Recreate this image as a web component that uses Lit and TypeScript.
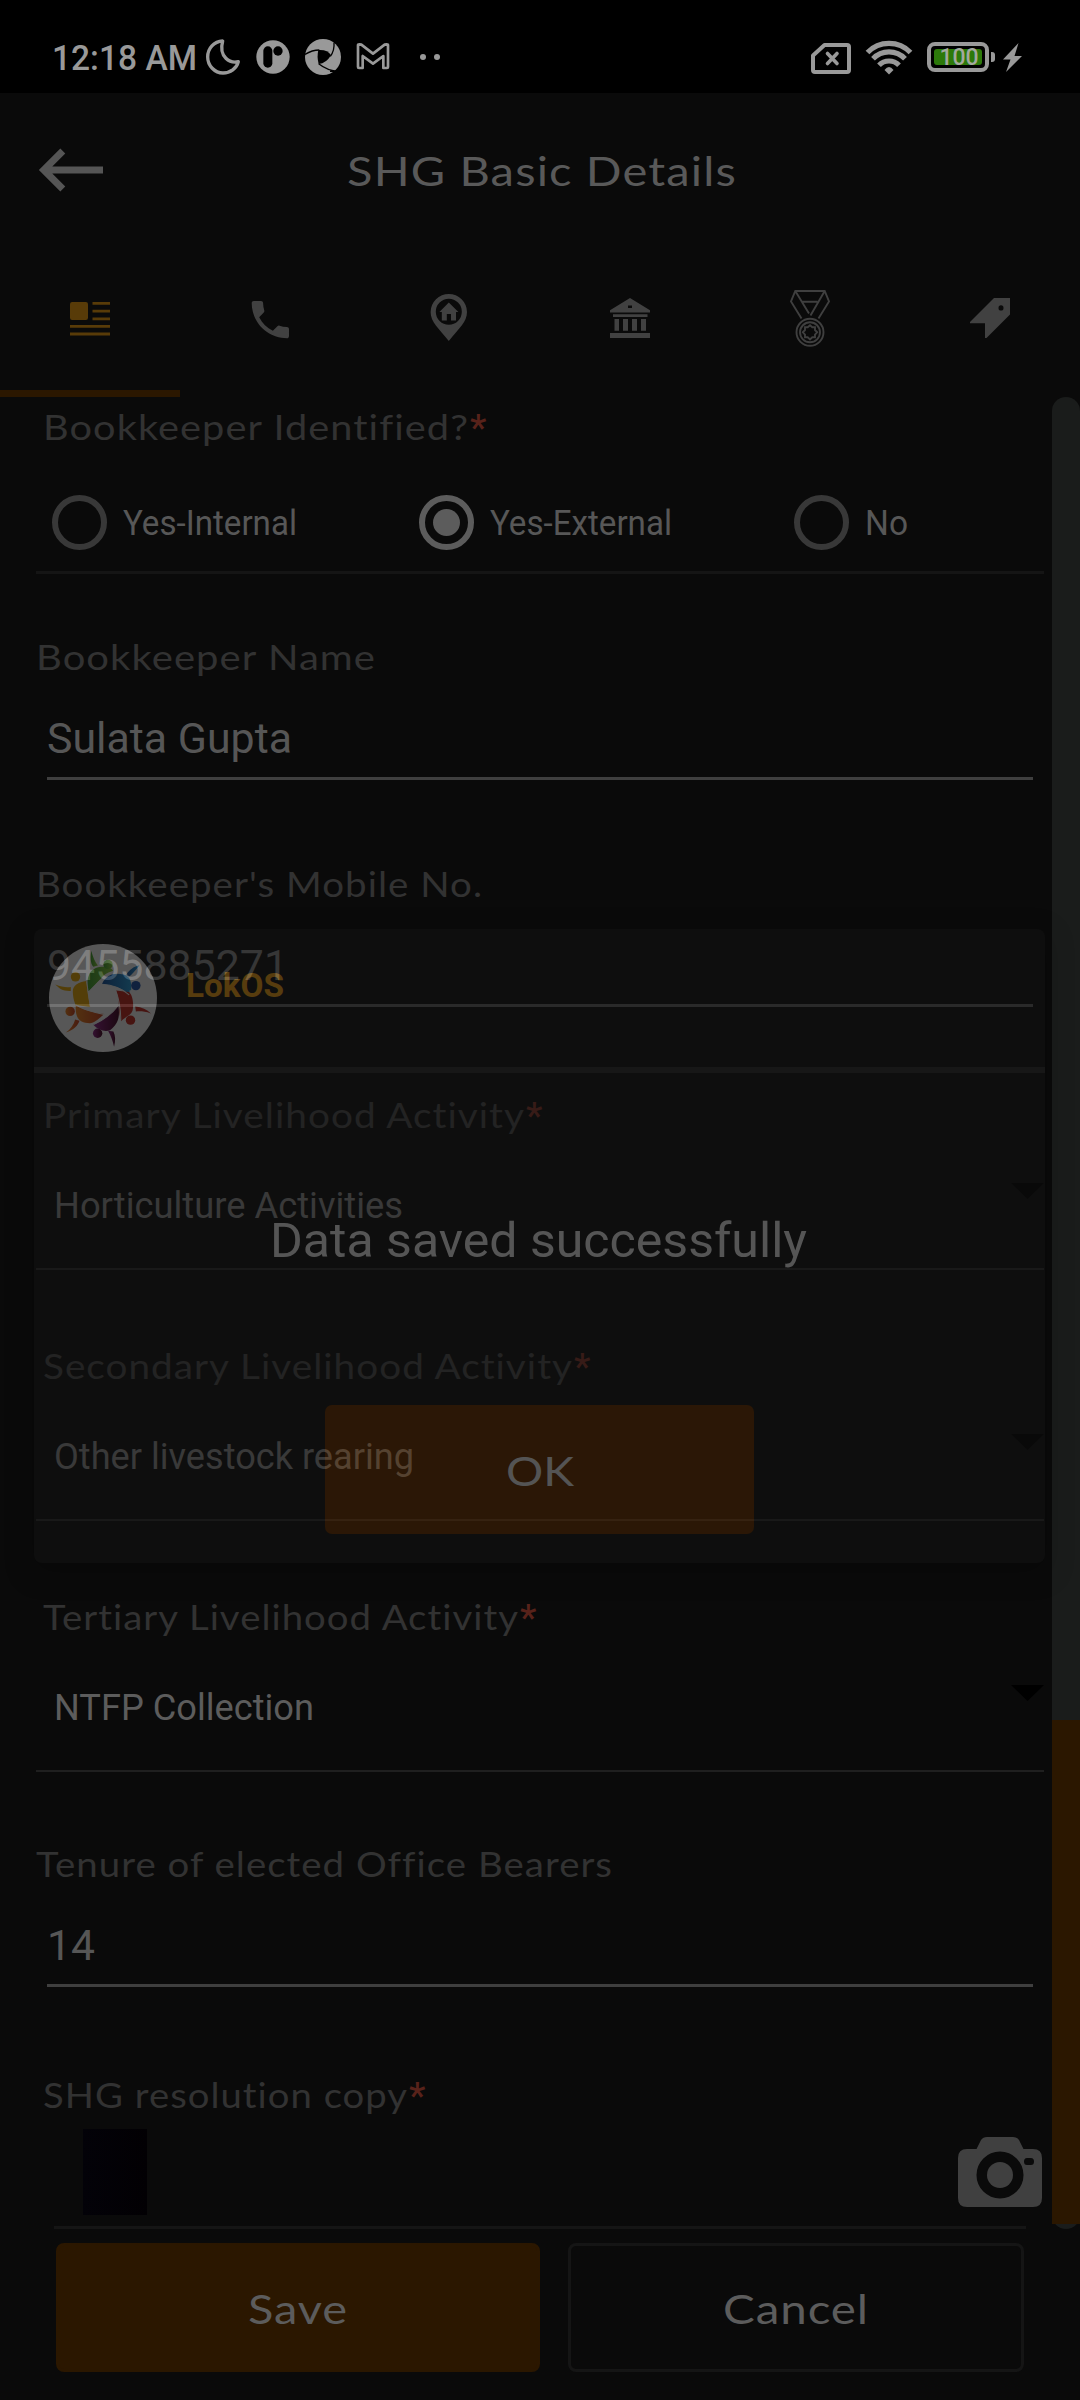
import { LitElement, html, css, svg, nothing } from "lit";
import { customElement, property } from "lit/decorators.js";
import { classMap } from "lit/directives/class-map.js";

/** A single line of text stretched horizontally to a given advance width. */
@customElement("fit-text")
class FitText extends LitElement {
  @property({ type: Number }) width = 0;

  static styles = css`
    :host {
      display: inline-block;
      white-space: nowrap;
      font-variant-ligatures: none;
    }
    .glyphs {
      display: inline-block;
      transform-origin: 0 50%;
    }
  `;

  firstUpdated() {
    const span = this.renderRoot.querySelector<HTMLElement>(".glyphs")!;
    const natural = span.getBoundingClientRect().width;
    if (this.width && natural) {
      span.style.transform = `scaleX(${this.width / natural})`;
      this.style.width = `${this.width}px`;
    }
  }

  render() {
    return html`<span class="glyphs"><slot></slot></span>`;
  }
}

@customElement("status-bar")
class StatusBar extends LitElement {
  static styles = css`
    :host {
      display: flex;
      align-items: flex-start;
      height: 93px;
      padding: 37px 57px 0 52px;
      box-sizing: border-box;
      background: #000;
      color: #999;
      font-family: Roboto, sans-serif;
    }
    svg {
      display: block;
      flex: none;
      fill: #999;
    }
    .time {
      width: 151px;
      height: 40px;
      font-size: 34.5px;
      line-height: 42px;
      font-weight: 500;
      white-space: nowrap;
    }
    .notes {
      display: flex;
      gap: 10px;
    }
    .more {
      margin-left: 12px;
    }
    .system {
      display: flex;
      margin-left: auto;
    }
    .wifi {
      margin-left: 14px;
    }
    .battery {
      display: flex;
      box-sizing: border-box;
      width: 62px;
      height: 30px;
      margin: 5px 0 0 14px;
      padding: 3px;
      border: 4px solid #999;
      border-radius: 8px;
    }
    .level {
      flex: 1;
      border-radius: 3px;
      background: #2c790a;
      color: #a3a99f;
      font-size: 23px;
      line-height: 18px;
      font-weight: 500;
      text-align: center;
      text-indent: 2px;
      white-space: nowrap;
    }
    .nub {
      width: 4px;
      height: 10px;
      margin: 15px 0 0 2px;
      border-radius: 0 3px 3px 0;
      background: #999;
    }
    .bolt {
      margin-left: 7px;
    }
  `;

  render() {
    return html`
      <div class="time"><fit-text width="145">12:18 AM</fit-text></div>
      <div class="notes">
        <svg width="40" height="40" viewBox="24 21 120 120">
          <path
            d="M83 33C57 34 38 55 38 81S59 129 84 129C106 129 125 116 130 95C106 101 70 82 83 33Z"
            fill="none" stroke="#999" stroke-width="10" stroke-linejoin="round"
          />
        </svg>
        <svg width="40" height="40" viewBox="174 21 120 120">
          <circle cx="234" cy="81" r="50" />
          <rect x="205" y="49" width="27" height="64" rx="13.5" fill="#000" />
          <circle cx="249" cy="63" r="14" fill="#000" />
        </svg>
        <svg width="40" height="40" viewBox="324 21 120 120">
          <circle cx="384" cy="81" r="54" />
          <path d="M370 60Q398 58 408 76Q394 100 371 102Q365 80 370 60Z" fill="#000" />
          <path
            d="M330 73Q352 60 373 60M417 38Q419 62 406 79M431 124Q397 122 371 101M437 124L405 124"
            fill="none" stroke="#000" stroke-width="4"
          />
        </svg>
        <svg width="40" height="40" viewBox="474 21 120 120">
          <path
            d="M489 111V46Q489 43 493 43L499 44L534 71L569 44L575 43Q579 43 579 46V111Q579 114 576 114H565V78L534 101L503 78V114H492Q489 114 489 111Z"
            fill="none" stroke="#999" stroke-width="8" stroke-linejoin="round"
          />
        </svg>
        <svg class="more" width="30" height="40" viewBox="660 21 90 120">
          <circle cx="684" cy="81" r="9" />
          <circle cx="726" cy="81" r="9" />
        </svg>
      </div>
      <div class="system">
        <svg width="40" height="40" viewBox="811 37 40 40">
          <path
            d="M824.5 45H847Q849 45 849 47V70Q849 72 847 72H815Q813 72 813 70V55.5Z"
            fill="none" stroke="#999" stroke-width="4" stroke-linejoin="round"
          />
          <path
            d="M827.5 53.5L837 63.5M837 53.5L827.5 63.5"
            fill="none" stroke="#999" stroke-width="3.6" stroke-linecap="round"
          />
        </svg>
        <svg class="wifi" width="48" height="40" viewBox="865 37 48 40">
          <g fill="none" stroke="#999" stroke-width="5.2">
            <path d="M867.5 52.5A30 30 0 0 1 910.5 52.5" />
            <path d="M873 58.8A22 22 0 0 1 905 58.8" />
            <path d="M879 65.2A14 14 0 0 1 899 65.2" />
          </g>
          <path d="M884.5 70Q889 64 893.5 70L889 74.5Z" />
        </svg>
        <div class="battery"><div class="level">100</div></div>
        <div class="nub"></div>
        <svg class="bolt" width="21" height="40" viewBox="1002 37 21 40">
          <path d="M1018.5 43L1003 59.5H1010.5L1006 72L1022 56H1014.5Z" />
        </svg>
      </div>
    `;
  }
}

const tabIcons = [
  svg`<rect x="10" y="14" width="18" height="18" rx="2.2"/>
    <path d="M32.5 14H50V16.8H32.5ZM32.5 21.8H50V24.6H32.5ZM32.5 29.4H50V32.2H32.5ZM10 37H50V39.8H10ZM10 44.6H50V47.4H10Z"/>`,
  svg`<path transform="translate(5.5 6.8) scale(2.07)" d="M6.62 10.79c1.44 2.83 3.76 5.14 6.59 6.59l2.2-2.2c.27-.27.67-.36 1.02-.24 1.12.37 2.33.57 3.57.57.55 0 1 .45 1 1V20c0 .55-.45 1-1 1-9.39 0-17-7.61-17-17 0-.55.45-1 1-1h3.5c.55 0 1 .45 1 1 0 1.25.2 2.45.57 3.57.11.35.03.74-.25 1.02l-2.2 2.2z"/>`,
  svg`<path fill-rule="evenodd" d="M28.8 6A18.2 18.2 0 0 1 47 24C47 34 39 40 28.8 53C18.6 40 10.6 34 10.6 24A18.2 18.2 0 0 1 28.8 6ZM28.8 10.7A13 13 0 1 0 28.8 36.7A13 13 0 1 0 28.8 10.7Z"/>
    <path d="M28.8 14.6L38.4 24H36V32.5H31V26H26.8V32.5H21.8V24H19.4Z"/>`,
  svg`<path fill-rule="evenodd" d="M30 10L50 22.3V24.5H10V22.3ZM28 17.5V20H32V17.5Z"/>
    <path d="M13 26.3H47.5V29H13ZM14.5 31H19V42.7H14.5ZM23 31H28V42.7H23ZM32 31H37V42.7H32ZM41 31H46V42.7H41ZM10 45H50V50H10Z"/>`,
  svg`<g fill="none" stroke="#3f3f3f" stroke-width="1.9">
      <path d="M21.5 30.5L11 13.5L15.3 3H44.7L49 13.5L38.5 30.5M15.3 3L29 25.5M44.7 3L30.5 27.5M22 13.7H37.5"/>
      <circle cx="30" cy="44.3" r="13.5"/><circle cx="30" cy="44.3" r="10"/>
      <path d="M30 37.2L32.3 39.3L35 39.3L35 42L37.2 44.3L35 46.6L35 49.3L32.3 49.3L30 51.4L27.7 49.3L25 49.3L25 46.6L22.8 44.3L25 42L25 39.3L27.7 39.3Z"/>
    </g>`,
  svg`<path fill-rule="evenodd" d="M34 10H50V26.5L26.5 50H25V35.3H10V34ZM41 17.2A2.5 2.7 0 1 0 41 22.6A2.5 2.7 0 1 0 41 17.2Z"/>`,
];

@customElement("page-header")
class PageHeader extends LitElement {
  static styles = css`
    :host {
      display: block;
      height: 304px;
    }
    .bar {
      display: grid;
      grid-template-columns: 347px 1fr;
      align-items: center;
      height: 153px;
    }
    .back {
      display: block;
      margin-left: 36px;
      fill: none;
      stroke: #555;
      stroke-width: 7;
    }
    .title {
      font: 41.5px/60px Lato, sans-serif;
      letter-spacing: 1px;
      color: #595959;
      margin-top: 1px;
    }
    .tabs {
      display: grid;
      grid-template-columns: repeat(6, 1fr);
      height: 151px;
    }
    .tab {
      display: flex;
      justify-content: center;
      box-sizing: border-box;
      padding-top: 42px;
      border-bottom: 7px solid transparent;
      fill: #414141;
    }
    .tab.on {
      fill: #583b08;
      border-color: #2b1700;
    }
  `;

  render() {
    return html`
      <div class="bar">
        <svg class="back" width="70" height="46" viewBox="36 146.5 70 46">
          <path d="M62.8 150.5L43.8 169.5L62.8 188.5M44 169.5H103" />
        </svg>
        <div class="title"><fit-text width="390">SHG Basic Details</fit-text></div>
      </div>
      <div class="tabs">
        ${tabIcons.map(
          (icon, i) => html`<div class=${classMap({ tab: true, on: i === 0 })}>
            <svg width="60" height="60" viewBox="0 0 60 60">${icon}</svg>
          </div>`,
        )}
      </div>
    `;
  }
}

@customElement("form-field")
class FormField extends LitElement {
  @property() kind: "text" | "select" = "text";
  @property() label = "";
  @property() value = "";
  @property({ type: Number }) labelWidth = 0;
  @property({ type: Number }) valueWidth = 0;
  @property({ type: Boolean }) required = false;

  static styles = css`
    :host {
      display: block;
    }
    .label {
      display: flex;
      height: 48px;
      font: 34px/48px Lato, sans-serif;
      letter-spacing: 0.9px;
      color: #323232;
    }
    .label.inset {
      padding-left: 7px;
    }
    .star {
      margin-left: 1px;
      font: 500 37px/50px Roboto, sans-serif;
      color: #58221a;
    }
    .input {
      height: 60px;
      margin: 28px 11px 0;
      padding-bottom: 8px;
      border-bottom: 3px solid #3f3f3f;
      font: 42px/60px Roboto, sans-serif;
      color: #565656;
    }
    .choice {
      display: flex;
      justify-content: space-between;
      height: 86px;
      margin-top: 43px;
      padding-left: 18px;
      border-bottom: 2px solid #1f1f1f;
      font: 36px/48px Roboto, sans-serif;
      color: #5c5c5c;
    }
    .caret {
      display: block;
      margin: 1px 0 0;
      fill: #000;
    }
  `;

  render() {
    const fitted = html`<fit-text .width=${this.valueWidth}>${this.value}</fit-text>`;
    return html`
      <div class=${classMap({ label: true, inset: this.required })}>
        <fit-text .width=${this.labelWidth}>${this.label}</fit-text>
        ${this.required ? html`<span class="star">*</span>` : nothing}
      </div>
      ${this.kind === "text"
        ? html`<div class="input">${fitted}</div>`
        : html`<div class="choice">
            ${fitted}
            <svg class="caret" width="33" height="16" viewBox="0 0 33 16"><path d="M0 0H33L16.5 16Z" /></svg>
          </div>`}
    `;
  }
}

@customElement("saved-dialog")
class SavedDialog extends LitElement {
  static styles = css`
    :host {
      display: flex;
      flex-direction: column;
      box-sizing: border-box;
      border-radius: 8px;
      background: #141414;
      box-shadow: 0 8px 26px 2px rgba(0, 0, 0, 0.4);
      opacity: 0.48;
      font-family: Roboto, sans-serif;
    }
    .head {
      display: flex;
      height: 138px;
      padding-left: 15px;
      border-bottom: 6px solid #262626;
    }
    .logo {
      display: block;
      margin-top: 15px;
    }
    .brand {
      margin: 37px 0 0 29px;
      font-size: 33px;
      line-height: 40px;
      font-weight: 700;
      color: #ab7413;
    }
    .message {
      height: 64px;
      margin-top: 135px;
      padding-right: 13px;
      text-align: center;
      font-size: 49px;
      line-height: 66px;
      color: #a8a8a8;
    }
    .ok {
      display: flex;
      align-items: center;
      justify-content: center;
      width: 429px;
      height: 129px;
      margin: 133px 0 0 291px;
      border-radius: 7px;
      background: #4f2702;
      font: 41.5px/60px Lato, sans-serif;
      color: #a6a6a6;
    }
  `;

  render() {
    return html`
      <div class="head">
        <svg class="logo" width="108" height="108" viewBox="28 27 322 322">
          <defs>
            <linearGradient id="g"><stop offset="0" stop-color="#2c7024" /><stop offset="1" stop-color="#648f2c" /></linearGradient>
            <linearGradient id="b"><stop offset="0" stop-color="#123a6e" /><stop offset="1" stop-color="#1e6f9a" /></linearGradient>
            <linearGradient id="p"><stop offset="0" stop-color="#641a5e" /><stop offset="1" stop-color="#30061a" /></linearGradient>
            <linearGradient id="o"><stop offset="0" stop-color="#a35c18" /><stop offset="1" stop-color="#8c2d18" /></linearGradient>
          </defs>
          <circle cx="189" cy="188" r="161" fill="#ababab" />
          <g fill="url(#g)">
            <path d="M145 170C138 130 146 98 185 95C205 94 216 100 219 107C198 114 188 122 182 132Z" />
            <circle cx="204" cy="88" r="14" />
            <path d="M154 47C160 68 165 80 174 91L160 95C151 84 151 65 154 47Z" />
          </g>
          <g fill="url(#b)">
            <path d="M186 146C200 118 222 112 250 118C270 123 275 140 273 164L268 166L268 180C252 160 228 152 186 146Z" />
            <circle cx="287" cy="151" r="14" fill="#173b78" />
            <path d="M298 90C284 108 276 116 267 125L258 120C268 101 282 94 298 90Z" />
          </g>
          <g fill="#8a1f1a">
            <path d="M228 166L266 170C279 180 281 210 277 226C272 240 258 242 243 257C234 230 240 195 228 166Z" />
            <circle cx="271" cy="254" r="14" />
            <path d="M285 213C305 215 320 222 332 234C312 227 300 227 287 228Z" />
          </g>
          <g fill="url(#p)">
            <path d="M160 268C190 255 215 235 235 210C238 235 240 262 210 284C195 290 175 284 160 268Z" />
            <circle cx="173" cy="293" r="14" />
            <path d="M204 286C212 300 218 315 222 333C227 315 226 300 220 288Z" />
          </g>
          <g fill="url(#o)">
            <path d="M108 209C120 220 150 230 193 236C178 248 165 262 150 263C120 262 105 250 108 209Z" />
            <circle cx="91" cy="228" r="14" />
            <path d="M78 291C102 283 114 271 119 256L106 252C102 268 92 281 78 291Z" />
          </g>
          <g fill="#a37708">
            <path d="M140 137C115 140 98 150 99 170C100 190 105 204 108 209L151 215C146 190 141 165 140 137Z" />
            <circle cx="107" cy="125" r="14" />
            <path d="M47 148C65 155 80 157 93 155V167C70 168 58 160 47 148Z" />
          </g>
          <path
            d="M145 171L182 133M140 138L145 171L151 214M186 147Q235 150 267 179M227 166Q242 205 242 256M236 209Q210 245 161 267M192 237Q150 230 108 209"
            fill="none" stroke="#ababab" stroke-width="3"
          />
        </svg>
        <div class="brand"><fit-text width="98">LokOS</fit-text></div>
      </div>
      <div class="message"><fit-text width="537">Data saved successfully</fit-text></div>
      <div class="ok"><fit-text width="68">OK</fit-text></div>
    `;
  }
}

@customElement("app-root")
class AppRoot extends LitElement {
  static styles = css`
    :host {
      display: block;
      position: relative;
      width: 1080px;
      height: 2400px;
      overflow: hidden;
      background: #0a0a0a;
    }
    .body {
      display: flex;
      height: 1832px;
    }
    .form {
      display: flex;
      flex-direction: column;
      width: 1008px;
      margin: 0 8px 0 36px;
      padding-top: 6px;
    }
    .label {
      display: flex;
      height: 48px;
      padding-left: 7px;
      font: 34px/48px Lato, sans-serif;
      letter-spacing: 0.9px;
      color: #323232;
    }
    .star {
      margin-left: 1px;
      font: 500 37px/50px Roboto, sans-serif;
      color: #58221a;
    }
    .radios {
      display: grid;
      grid-template-columns: 367px 375px 1fr;
      align-items: center;
      height: 98px;
      margin-top: 22px;
      padding-left: 16px;
      border-bottom: 3px solid #151515;
    }
    .radio {
      display: flex;
      align-items: center;
      gap: 16px;
      font: 34.5px/48px Roboto, sans-serif;
      color: #575757;
    }
    .radio fit-text {
      margin-top: 2px;
    }
    .ring {
      display: flex;
      align-items: center;
      justify-content: center;
      box-sizing: border-box;
      width: 55px;
      height: 55px;
      border: 6px solid #383838;
      border-radius: 50%;
    }
    .ring.on {
      border-color: #5c5c5c;
    }
    .dot {
      width: 27px;
      height: 27px;
      border-radius: 50%;
      background: #5c5c5c;
    }
    .name { margin-top: 59px; }
    .mobile { margin-top: 80px; }
    .primary { margin-top: 84px; }
    .next { margin-top: 72px; }
    .tenure { margin-top: 68px; }
    .copy { margin-top: 84px; }
    .upload {
      display: flex;
      justify-content: space-between;
      height: 97px;
      margin: 10px 0 0 18px;
    }
    .thumb {
      width: 64px;
      height: 86px;
      margin-left: 29px;
      background: linear-gradient(90deg, #030208, #020003);
    }
    .camera {
      display: block;
      margin: 8px 2px 0 0;
      fill: #404040;
    }
    .rule {
      flex: none;
      width: 972px;
      height: 3px;
      margin-left: 18px;
      background: #151515;
    }
    .scroll {
      display: flex;
      align-items: flex-end;
      width: 28px;
      padding-bottom: 5px;
      box-sizing: border-box;
      border-radius: 14px;
      background: #1a1c1b;
    }
    .thumbbar {
      width: 28px;
      height: 504px;
      background: #2b1700;
    }
    .actions {
      display: grid;
      grid-template-columns: 484px 456px;
      gap: 28px;
      height: 129px;
      margin: 14px 0 0 56px;
      font: 41.5px/60px Lato, sans-serif;
      letter-spacing: 0.8px;
      color: #5c5c5c;
    }
    .button {
      display: flex;
      align-items: center;
      justify-content: center;
      box-sizing: border-box;
      border: 3px solid #151515;
      border-radius: 8px;
    }
    .button.main {
      border-color: #2b1700;
      background: #2b1700;
    }
    .dialog {
      position: absolute;
      left: 34px;
      top: 929px;
      width: 1011px;
      height: 634px;
    }
  `;

  private radios = [
    { text: "Yes-Internal", width: 174, on: false },
    { text: "Yes-External", width: 182, on: true },
    { text: "No", width: 43, on: false },
  ];

  render() {
    return html`
      <status-bar></status-bar>
      <page-header></page-header>
      <div class="body">
        <div class="form">
          <div class="label">
            <fit-text width="426">Bookkeeper Identified?</fit-text><span class="star">*</span>
          </div>
          <div class="radios">
            ${this.radios.map(
              (r) => html`<div class="radio">
                <span class=${classMap({ ring: true, on: r.on })}>${r.on ? html`<span class="dot"></span>` : nothing}</span>
                <fit-text .width=${r.width}>${r.text}</fit-text>
              </div>`,
            )}
          </div>
          <form-field class="name" label="Bookkeeper Name" .labelWidth=${340} value="Sulata Gupta" .valueWidth=${245}></form-field>
          <form-field class="mobile" label="Bookkeeper's Mobile No." .labelWidth=${447} value="9455885271" .valueWidth=${241}></form-field>
          <form-field class="primary" kind="select" required label="Primary Livelihood Activity" .labelWidth=${482} value="Horticulture Activities" .valueWidth=${349}></form-field>
          <form-field class="next" kind="select" required label="Secondary Livelihood Activity" .labelWidth=${530} value="Other livestock rearing" .valueWidth=${360}></form-field>
          <form-field class="next" kind="select" required label="Tertiary Livelihood Activity" .labelWidth=${476} value="NTFP Collection" .valueWidth=${260}></form-field>
          <form-field class="tenure" label="Tenure of elected Office Bearers" .labelWidth=${577} value="14" .valueWidth=${48}></form-field>
          <div class="label copy">
            <fit-text width="365">SHG resolution copy</fit-text><span class="star">*</span>
          </div>
          <div class="upload">
            <div class="thumb"></div>
            <svg class="camera" width="84" height="70" viewBox="0 0 84 70">
              <path
                fill-rule="evenodd"
                d="M9 12H18.5L23 3Q25 0 29 0H55Q59 0 61 3L65.5 12H75Q84 12 84 21V61Q84 70 75 70H9Q0 70 0 61V21Q0 12 9 12ZM42 14.5A23.5 23.5 0 1 0 42 61.5A23.5 23.5 0 1 0 42 14.5ZM69 21Q66 21 66 24.5T69 28H73Q76 28 76 24.5T73 21Z"
              />
              <circle cx="42" cy="38" r="13" />
            </svg>
          </div>
          <div class="rule"></div>
        </div>
        <div class="scroll"><div class="thumbbar"></div></div>
      </div>
      <div class="actions">
        <div class="button main"><fit-text width="100">Save</fit-text></div>
        <div class="button"><fit-text width="146">Cancel</fit-text></div>
      </div>
      <saved-dialog class="dialog"></saved-dialog>
    `;
  }
}
